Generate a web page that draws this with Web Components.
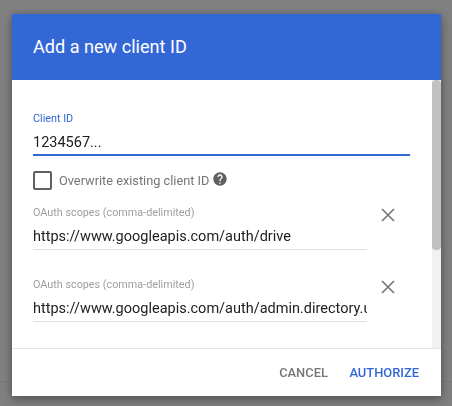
<!DOCTYPE html>
<html><head><meta charset="utf-8"><style>
html,body{margin:0;padding:0;width:452px;height:406px;overflow:hidden;background:#808080;font-family:Roboto,"Liberation Sans",sans-serif}
body{display:flex;flex-direction:column;padding:14px 11px 10px 12px;box-sizing:border-box;background:linear-gradient(#808080 381px,#787878 381px,#787878 382px,#808080 382px)}
</style></head><body>
<client-dialog heading="Add a new client ID">
<text-field label="Client ID" value="1234567..." focused></text-field>
<check-row label="Overwrite existing client ID"></check-row>
<scope-row value="https://www.googleapis.com/auth/drive"></scope-row>
<scope-row value="https://www.googleapis.com/auth/admin.directory.user"></scope-row>
</client-dialog>
<script>
function def(name,html,init){customElements.define(name,class extends HTMLElement{connectedCallback(){if(this.shadowRoot)return;const r=this.attachShadow({mode:'open'});r.innerHTML=html;if(init)init.call(this,r)}})}
def('client-dialog',`<style>
:host{display:flex;flex-direction:column;flex:1;background:#fff;min-height:0;box-shadow:0 5px 10px rgba(0,0,0,.25),0 0 8px rgba(0,0,0,.2);filter:blur(.3px)}
header{height:65.5px;background:#3367d6;color:#fff;font-size:18.1px;padding:0 21px;display:flex;align-items:center;flex:none;box-sizing:border-box}
.body{flex:1;min-height:0;display:flex}
.content{flex:1;padding:33px 22px 0 21px;min-width:0;overflow:hidden}
.track{width:9px;background:#f1f1f1;flex:none}
.thumb{height:170px;background:#c1c1c1;border-radius:4px}
footer{height:48px;flex:none;border-top:1px solid #e3e3e3;display:flex;justify-content:flex-end;align-items:center;gap:21.5px;padding:0 22px 0 0;font-size:12.9px;font-weight:500;box-sizing:border-box}
.c{color:#757575}.a{color:#3367d6}
</style><header></header><div class="body"><div class="content"><slot></slot></div><div class="track"><div class="thumb"></div></div></div>
<footer><span class="c">CANCEL</span><span class="a">AUTHORIZE</span></footer>`,function(r){r.querySelector('header').textContent=this.getAttribute('heading')});
def('text-field',`<style>
:host{display:block}
.l{font-size:10.8px;line-height:12px;color:#3367d6}
.v{font-size:14.5px;line-height:20px;color:#212121;margin-top:8px;white-space:nowrap;overflow:hidden}
.u{height:2px;background:#3367d6;margin-top:1px}
</style><div class="l"></div><div class="v"></div><div class="u"></div>`,function(r){r.querySelector('.l').textContent=this.getAttribute('label');r.querySelector('.v').textContent=this.getAttribute('value')});
def('check-row',`<style>
:host{display:flex;align-items:center;margin:15px 0 16px;height:20px;color:#757575;font-size:12.75px}
.b{width:15px;height:15px;border:2px solid #616161;border-radius:2px;margin-right:7px;flex:none}
svg{margin:-3px 0 0 3px;flex:none}
</style><div class="b"></div><span></span><svg width="16" height="16" viewBox="0 0 24 24"><path fill="#616161" d="M12 2C6.48 2 2 6.48 2 12s4.48 10 10 10 10-4.48 10-10S17.52 2 12 2zm1 17h-2v-2h2v2zm2.07-7.75l-.9.92C13.45 12.9 13 13.5 13 15h-2v-.5c0-1.1.45-2.1 1.17-2.83l1.24-1.26c.37-.36.59-.86.59-1.41 0-1.1-.9-2-2-2s-2 .9-2 2H8c0-2.21 1.79-4 4-4s4 1.79 4 4c0 .88-.36 1.68-.93 2.25z"/></svg>`,function(r){r.querySelector('span').textContent=this.getAttribute('label')});
def('scope-row',`<style>
:host{display:flex;align-items:flex-start;margin-top:15px;height:57px}
.f{width:334px;flex:none}
.l{font-size:10.8px;line-height:12px;color:#9e9e9e}
.v{font-size:14.5px;line-height:20px;color:#212121;margin-top:8px;white-space:nowrap;overflow:hidden}
.u{height:1px;background:#e0e0e0;margin-top:2px}
.x{margin-left:13px;margin-top:0;flex:none}
</style><div class="f"><div class="l">OAuth scopes (comma-delimited)</div><div class="v"></div><div class="u"></div></div>
<svg class="x" width="16" height="16" viewBox="0 0 16 16"><path d="M2 2L14 14M14 2L2 14" stroke="#757575" stroke-width="1.6" fill="none"/></svg>`,function(r){r.querySelector('.v').textContent=this.getAttribute('value')});
</script></body></html>
